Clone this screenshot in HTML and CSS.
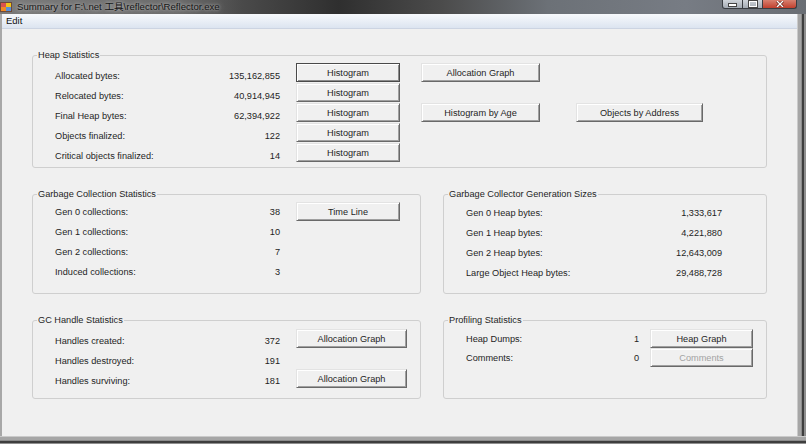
FILE: index.html
```html
<!DOCTYPE html>
<html lang="en">
<head>
  <meta charset="UTF-8">
  <meta name="viewport" content="width=device-width, initial-scale=1.0">
  <title>Summary for F:\.net 工具\reflector\Reflector.exe</title>
  <link rel="stylesheet" href="styles.css">
</head>
<body>
  <div class="window">
    <div class="titlebar">
      <svg class="app-icon" width="13" height="12" viewBox="0 0 13 12">
        <rect x="0" y="1" width="6" height="5" fill="#d9534f"/>
        <rect x="6" y="1" width="6" height="5" fill="#f0c419"/>
        <rect x="0" y="6" width="6" height="5" fill="#f08a24"/>
        <rect x="6" y="6" width="6" height="5" fill="#5b8fd6"/>
        <rect x="0.5" y="1.5" width="11" height="9" fill="none" stroke="#6d4a3a" stroke-width="1"/>
      </svg>
      <span class="title">Summary for F:\.net 工具\reflector\Reflector.exe</span>
      <div class="caption">
        <div class="cap-btn cap-min"><span class="glyph-min"></span></div>
        <div class="cap-btn cap-max"><span class="glyph-max"></span></div>
        <div class="cap-btn cap-close">
          <svg width="8" height="6" viewBox="0 0 8 6">
            <path d="M1 0 L7 6 M7 0 L1 6" stroke="#5a1a10" stroke-width="2.6"/>
            <path d="M1 0 L7 6 M7 0 L1 6" stroke="#ffffff" stroke-width="1.4"/>
          </svg>
        </div>
      </div>
    </div>

    <div class="frame">
      <div class="client">
        <div class="menubar"><span class="menu-item">Edit</span></div>

        <div class="content">
          <div class="group heap">
            <span class="group-title">Heap Statistics</span>
            <div class="stats">
              <span class="lbl">Allocated bytes:</span>
              <span class="val">135,162,855</span>
              <button class="btn btn-default">Histogram</button>
              <button class="btn btn-wide">Allocation Graph</button>

              <span class="lbl">Relocated bytes:</span>
              <span class="val">40,914,945</span>
              <button class="btn">Histogram</button>

              <span class="lbl">Final Heap bytes:</span>
              <span class="val">62,394,922</span>
              <button class="btn">Histogram</button>
              <button class="btn btn-wide">Histogram by Age</button>
              <button class="btn btn-addr">Objects by Address</button>

              <span class="lbl">Objects finalized:</span>
              <span class="val">122</span>
              <button class="btn">Histogram</button>

              <span class="lbl">Critical objects finalized:</span>
              <span class="val">14</span>
              <button class="btn">Histogram</button>
            </div>
          </div>

          <div class="pair">
            <div class="group gc">
              <span class="group-title">Garbage Collection Statistics</span>
              <div class="stats">
                <span class="lbl">Gen 0 collections:</span>
                <span class="val">38</span>
                <button class="btn">Time Line</button>

                <span class="lbl">Gen 1 collections:</span>
                <span class="val">10</span>

                <span class="lbl">Gen 2 collections:</span>
                <span class="val">7</span>

                <span class="lbl">Induced collections:</span>
                <span class="val">3</span>
              </div>
            </div>

            <div class="group gens">
              <span class="group-title">Garbage Collector Generation Sizes</span>
              <div class="stats">
                <span class="lbl">Gen 0 Heap bytes:</span>
                <span class="val">1,333,617</span>

                <span class="lbl">Gen 1 Heap bytes:</span>
                <span class="val">4,221,880</span>

                <span class="lbl">Gen 2 Heap bytes:</span>
                <span class="val">12,643,009</span>

                <span class="lbl">Large Object Heap bytes:</span>
                <span class="val">29,488,728</span>
              </div>
            </div>
          </div>

          <div class="pair">
            <div class="group handles">
              <span class="group-title">GC Handle Statistics</span>
              <div class="stats">
                <span class="lbl">Handles created:</span>
                <span class="val">372</span>
                <button class="btn">Allocation Graph</button>

                <span class="lbl">Handles destroyed:</span>
                <span class="val">191</span>

                <span class="lbl">Handles surviving:</span>
                <span class="val">181</span>
                <button class="btn">Allocation Graph</button>
              </div>
            </div>

            <div class="group profiling">
              <span class="group-title">Profiling Statistics</span>
              <div class="stats">
                <span class="lbl">Heap Dumps:</span>
                <span class="val">1</span>
                <button class="btn">Heap Graph</button>

                <span class="lbl">Comments:</span>
                <span class="val">0</span>
                <button class="btn" disabled>Comments</button>
              </div>
            </div>
          </div>
        </div>
      </div>
      <div class="edge-right"></div>
    </div>
    <div class="edge-bottom"></div>
  </div>
</body>
</html>
```

FILE: styles.css
```css
body {
  margin: 0;
  font-family: "Liberation Sans", Arial, sans-serif;
  font-size: 9.2px;
  color: #1e1e1e;
  background-color: #f0f0f0;
}
.window {
  width: 806px;
  height: 444px;
  display: flex;
  flex-direction: column;
  overflow: hidden;
}

/* title bar (aero glass, cropped) */
.titlebar {
  height: 14px;
  flex-shrink: 0;
  display: flex;
  align-items: flex-start;
  padding-right: 9px;
  background: linear-gradient(90deg, #7a7a7a 0%, #6b6b6b 22%, #4a4a4a 30%, #2f2f2f 42%, #4c4c4c 55%, #6c7177 68%, #777c84 85%, #6a6e74 100%);
}
.app-icon {
  margin-top: 1px;
  flex-shrink: 0;
}
.title {
  margin-left: 4px;
  line-height: 13px;
  font-size: 9.6px;
  font-family: "Liberation Sans", "Noto Sans CJK SC", sans-serif;
  color: #151515;
  text-shadow: 0 0 3px #bdbdbd, 0 0 7px rgba(255, 255, 255, 0.45);
  white-space: nowrap;
}
.caption {
  margin-left: auto;
  display: flex;
  height: 8px;
}
.cap-btn {
  width: 19px;
  height: 8px;
  border: 1px solid #3a3d42;
  border-top: none;
  border-left: none;
  background: linear-gradient(#cfd4da, #a3aab3);
  display: flex;
  justify-content: center;
  align-items: flex-end;
  overflow: hidden;
}
.cap-min {
  border-left: 1px solid #3a3d42;
  border-radius: 0 0 0 3px;
}
.cap-close {
  width: 33px;
  border-radius: 0 0 3px 0;
  background: linear-gradient(#d8806f, #c1402e);
  align-items: center;
}
.glyph-min {
  width: 7px;
  height: 2px;
  margin-bottom: 2px;
  background: #fff;
  box-shadow: 0 0 0 1px #454545;
}
.glyph-max {
  width: 6px;
  height: 4px;
  margin-bottom: 1px;
  border: 1px solid #fff;
  box-shadow: 0 0 0 1px #454545;
}

/* frame */
.frame {
  flex: 1;
  display: flex;
  min-height: 0;
}
.client {
  flex: 1;
  display: flex;
  flex-direction: column;
  border-left: 2px solid #a8a8a8;
  background-color: #f0f0f0;
}
.edge-right {
  width: 9px;
  flex-shrink: 0;
  background: linear-gradient(90deg, #cacaca 0 1px, #a6a6a6 1px 4px, #8c8c8c 4px 5px, #3e3e3e 5px 7px, #8f8f8f 7px 9px);
}
.edge-bottom {
  height: 8px;
  flex-shrink: 0;
  background: linear-gradient(#cacaca 0 1px, #a6a6a6 1px 4px, #8c8c8c 4px 5px, #3e3e3e 5px 7px, #8f8f8f 7px 8px);
}

/* menu */
.menubar {
  height: 14px;
  border-bottom: 1px solid #ccd4e2;
  background: linear-gradient(#f7f9fc, #dce4f0);
  padding-left: 4px;
  line-height: 14px;
  font-size: 9.5px;
  color: #111;
}

/* group boxes */
.content {
  display: flex;
  flex-direction: column;
  gap: 26px;
  padding: 26px 30px 0;
}
.pair {
  display: grid;
  grid-template-columns: 389px 1fr;
  column-gap: 22px;
}
.group {
  border: 1px solid #cfcfcf;
  border-radius: 3px;
}
.group-title {
  display: block;
  width: fit-content;
  margin: -7px 0 0 4px;
  padding: 0 1px;
  line-height: 13px;
  background-color: #f0f0f0;
}
.stats {
  display: grid;
  grid-auto-rows: 20px;
  padding-left: 22px;
  margin-top: 1px;
  --pad: 7px;
}
.lbl {
  grid-column: 1;
  line-height: 13px;
  padding-top: var(--pad);
  white-space: nowrap;
}
.val {
  line-height: 13px;
  padding-top: var(--pad);
  padding-right: 16px;
  text-align: right;
}

.heap {
  padding-bottom: 4px;
}
.heap .stats {
  grid-template-columns: 150px 91px 125px 155px 127px;
}
.gc {
  padding-bottom: 11px;
}
.gc .stats {
  grid-template-columns: 150px 91px 104px;
  --pad: 4px;
}
.gens .stats {
  grid-template-columns: 180px 76px;
  --pad: 5px;
}
.gens .val {
  padding-right: 0;
}
.handles {
  padding-bottom: 9px;
}
.handles .stats {
  grid-template-columns: 150px 91px 111px;
  margin-top: 2px;
  --pad: 6px;
}
.profiling .stats {
  grid-template-columns: 120px 64px 103px;
  grid-auto-rows: 19px;
  margin-top: 2px;
  --pad: 4px;
}
.profiling .val {
  padding-right: 11px;
}

/* buttons */
.btn {
  align-self: start;
  width: 104px;
  height: 19px;
  box-sizing: border-box;
  padding: 0;
  font: inherit;
  color: #1e1e1e;
  line-height: 16px;
  background-color: #f0f0f0;
  border: 1px solid;
  border-color: #e3e3e3 #696969 #696969 #e3e3e3;
  box-shadow: inset 1px 1px #ffffff, inset -1px -1px #a0a0a0;
}
.btn-default {
  border-color: #4a4a4a;
  box-shadow: inset 1px 1px #ffffff, inset -1px -1px #8c8c8c;
}
.btn-wide {
  width: 119px;
}
.btn-addr {
  width: 127px;
}
.handles .btn {
  width: 111px;
}
.profiling .btn {
  width: 103px;
}
.btn:disabled {
  color: #a3a3a3;
}
```
